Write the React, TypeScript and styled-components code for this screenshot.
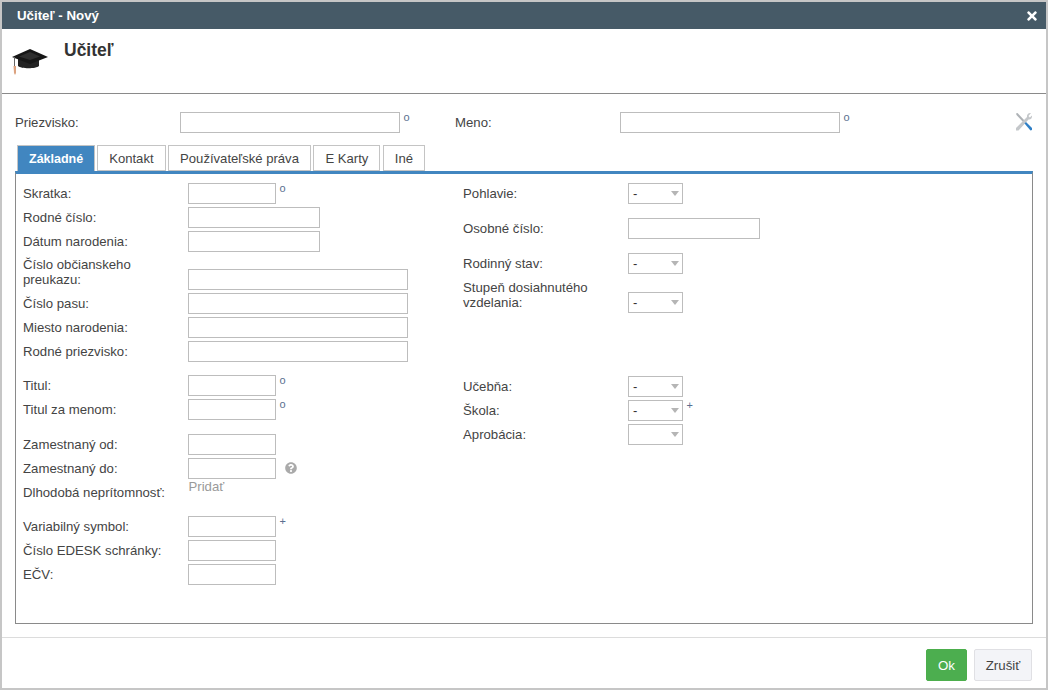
import styled, { createGlobalStyle } from "styled-components";
import { FaTimes, FaQuestionCircle } from "react-icons/fa";

const GlobalStyle = createGlobalStyle`
  html, body { margin: 0; padding: 0; background: #fff; }
  body { font-family: "Liberation Sans", Arial, sans-serif; font-size: 13px; color: #444; }
  * { box-sizing: border-box; }
`;

const CapIcon = () => (
  <svg width="38" height="30" viewBox="0 0 38 30">
    <path d="M7 11 L19 16 L28 12 L28 19 C25 22 10 22 7 19 Z" fill="#222" />
    <path d="M1 10 L19 2 L37 10 L19 17 Z" fill="#161616" />
    <path d="M8 9.5 L19 5 L29 9.5 L19 13 Z" fill="#2e2e2e" />
    <path d="M3.5 10 L3.5 20" stroke="#666" strokeWidth="1" />
    <path d="M2.5 19 L5 19 L5 26 L4 28 L3 26 Z" fill="#dca27f" />
  </svg>
);

const ToolsIcon = () => (
  <svg width="18" height="20" viewBox="0 0 18 20">
    <path d="M1 1.5 L2.5 1 L10 9 L8.5 10.5 L1.5 3 Z" fill="#aeb2b6" />
    <path d="M16 1 C13.5 0.5 11.5 2.5 12 5 L1 16 L1 18.5 L3.5 18.5 L13.5 7.5 C15.5 8 17.5 6 17 3.5 L14.8 5.4 L13.5 4 Z" fill="#c4c7ca" />
    <path d="M9.5 11.5 L11 10 L17 16 L17 18 L15.5 18.5 Z" fill="#2f7fc6" />
  </svg>
);

type FieldDef = {
  label: string;
  width?: number;
  select?: string;
  mark?: string;
  help?: boolean;
  height?: number;
  tall?: boolean;
};

const leftGroups: FieldDef[][] = [
  [
    { label: "Skratka:", width: 88, mark: "o" },
    { label: "Rodné číslo:", width: 132 },
    { label: "Dátum narodenia:", width: 132 },
    { label: "Číslo občianskeho preukazu:", width: 220, height: 38, tall: true },
    { label: "Číslo pasu:", width: 220 },
    { label: "Miesto narodenia:", width: 220 },
    { label: "Rodné priezvisko:", width: 220 },
  ],
  [
    { label: "Titul:", width: 88, mark: "o" },
    { label: "Titul za menom:", width: 88, mark: "o" },
  ],
  [
    { label: "Zamestnaný od:", width: 88 },
    { label: "Zamestnaný do:", width: 88, help: true },
  ],
];

const leftLast: FieldDef[] = [
  { label: "Variabilný symbol:", width: 88, mark: "+" },
  { label: "Číslo EDESK schránky:", width: 88 },
  { label: "EČV:", width: 88 },
];

const Field = ({ label, width, select, mark, help, height, tall }: FieldDef) => (
  <FieldRow $height={height ?? 24} $tall={tall}>
    <Label>{label}</Label>
    {select !== undefined ? (
      <SelectBox>
        {select}
        <Caret />
      </SelectBox>
    ) : (
      <TextInput $width={width ?? 88} />
    )}
    {mark && <Mark>{mark}</Mark>}
    {help && (
      <Help>
        <FaQuestionCircle size={12} />
      </Help>
    )}
  </FieldRow>
);

export default function App() {
  return (
    <>
      <GlobalStyle />
      <Dialog>
        <TitleBar>
          <span>Učiteľ - Nový</span>
          <CloseBtn>
            <FaTimes size={14} />
          </CloseBtn>
        </TitleBar>
        <Head>
          <CapWrap>
            <CapIcon />
          </CapWrap>
          <HeadTitle>Učiteľ</HeadTitle>
        </Head>
        <NameRow>
          <NameCell>
            <NameLabel>Priezvisko:</NameLabel>
            <NameInput />
            <Mark>o</Mark>
          </NameCell>
          <NameCell>
            <NameLabel>Meno:</NameLabel>
            <NameInput />
            <Mark>o</Mark>
          </NameCell>
          <ToolsWrap>
            <ToolsIcon />
          </ToolsWrap>
        </NameRow>
        <Tabs>
          <Tab $active>Základné</Tab>
          <Tab>Kontakt</Tab>
          <Tab>Používateľské práva</Tab>
          <Tab>E Karty</Tab>
          <Tab>Iné</Tab>
        </Tabs>
        <Panel>
          <LeftCol>
            <Group>
              {leftGroups[0].map((f) => (
                <Field key={f.label} {...f} />
              ))}
            </Group>
            <Group $gap={11}>
              {leftGroups[1].map((f) => (
                <Field key={f.label} {...f} />
              ))}
            </Group>
            <Group $gap={0}>
              {leftGroups[2].map((f) => (
                <Field key={f.label} {...f} />
              ))}
            </Group>
            <AbsenceRow>
              <Label>Dlhodobá neprítomnosť:</Label>
              <AddLink>Pridať</AddLink>
            </AbsenceRow>
            <Group>
              {leftLast.map((f) => (
                <Field key={f.label} {...f} />
              ))}
            </Group>
          </LeftCol>
          <RightCol>
            <TallGroup>
              <Field label="Pohlavie:" select="-" height={35} />
              <Field label="Osobné číslo:" width={132} height={35} />
              <Field label="Rodinný stav:" select="-" height={27} />
              <Field label="Stupeň dosiahnutého vzdelania:" select="-" height={36} tall />
            </TallGroup>
            <Group>
              <Field label="Učebňa:" select="-" />
              <Field label="Škola:" select="-" mark="+" />
              <Field label="Aprobácia:" select="" />
            </Group>
          </RightCol>
        </Panel>
        <Footer>
          <OkButton>Ok</OkButton>
          <CancelButton>Zrušiť</CancelButton>
        </Footer>
      </Dialog>
    </>
  );
}

const Dialog = styled.div`
  width: 1048px;
  height: 690px;
  border: 2px solid #c6c6c6;
  display: flex;
  flex-direction: column;
  background: #fff;
  overflow: hidden;
`;

const TitleBar = styled.div`
  height: 27px;
  flex: none;
  background: #465a67;
  color: #fff;
  font-weight: bold;
  font-size: 13.3px;
  display: flex;
  align-items: center;
  justify-content: space-between;
  padding: 0 7px 0 15px;
`;

const CloseBtn = styled.span`
  display: flex;
  color: #fff;
`;

const Head = styled.div`
  height: 65px;
  flex: none;
  border-bottom: 1px solid #8a8a8a;
  display: flex;
  align-items: flex-start;
`;

const CapWrap = styled.div`
  margin: 18px 0 0 9px;
  width: 53px;
`;

const HeadTitle = styled.h1`
  margin: 11px 0 0;
  font-size: 17.5px;
  font-weight: bold;
  color: #333;
`;

const NameRow = styled.div`
  height: 51px;
  flex: none;
  display: flex;
  padding: 18px 13px 0 13px;
`;

const NameCell = styled.div`
  width: 440px;
  display: flex;
  align-items: flex-start;
  &:last-of-type {
    width: auto;
  }
`;

const NameLabel = styled.label`
  width: 165px;
  flex: none;
  line-height: 21px;
  font-size: 13.2px;
`;

const NameInput = styled.input`
  width: 220px;
  height: 21px;
  border: 1px solid #bdbdbd;
  background: #fff;
  padding: 0;
  flex: none;
`;

const ToolsWrap = styled.div`
  margin-left: auto;
  display: flex;
`;

const Tabs = styled.div`
  height: 26px;
  flex: none;
  display: flex;
  gap: 2.5px;
  padding-left: 15px;
`;

const Tab = styled.div<{ $active?: boolean }>`
  height: 26px;
  padding: 0 11px;
  display: flex;
  align-items: center;
  font-size: ${(p) => (p.$active ? "12.5px" : "13.1px")};
  border: 1px solid #c4c4c4;
  border-bottom: ${(p) => (p.$active ? "none" : "1px solid #c4c4c4")};
  background: ${(p) => (p.$active ? "#4186c0" : "#fff")};
  color: ${(p) => (p.$active ? "#fff" : "#444")};
  font-weight: ${(p) => (p.$active ? "bold" : "normal")};
  margin-right: ${(p) => (p.$active ? "-0.5px" : "0")};
`;

const Panel = styled.div`
  width: 1018px;
  height: 453px;
  flex: none;
  margin-left: 13px;
  border: 1px solid #8a8a8a;
  border-top: 3px solid #4186c0;
  padding: 9px 0 0 7px;
  display: flex;
`;

const LeftCol = styled.div`
  width: 440px;
  flex: none;
  display: flex;
  flex-direction: column;
`;

const RightCol = styled.div`
  flex: 1;
  display: flex;
  flex-direction: column;
`;

const Group = styled.div<{ $gap?: number }>`
  display: flex;
  flex-direction: column;
  margin-bottom: ${(p) => p.$gap ?? 10}px;
`;

const TallGroup = styled(Group)`
  height: 193px;
  margin-bottom: 0;
`;

const FieldRow = styled.div<{ $height: number; $tall?: boolean }>`
  height: ${(p) => p.$height}px;
  display: flex;
  align-items: ${(p) => (p.$tall ? "flex-end" : "flex-start")};
  padding-bottom: ${(p) => (p.$tall ? "3px" : "0")};
`;

const Label = styled.label`
  width: 165px;
  flex: none;
  font-size: 13.2px;
  line-height: 15px;
  padding: 3px 20px 3px 0;
  color: #444;
`;

const TextInput = styled.input<{ $width: number }>`
  width: ${(p) => p.$width}px;
  height: 21px;
  flex: none;
  padding: 0;
  border: 1px solid #bdbdbd;
  background: #fff;
`;

const SelectBox = styled.div`
  width: 55px;
  height: 21px;
  flex: none;
  border: 1px solid #bdbdbd;
  padding-left: 4px;
  line-height: 19px;
  position: relative;
  color: #333;
`;

const Caret = styled.span`
  position: absolute;
  right: 3px;
  top: 7px;
  width: 0;
  height: 0;
  border-left: 4.5px solid transparent;
  border-right: 4.5px solid transparent;
  border-top: 5px solid #b5b5b5;
`;

const Mark = styled.span`
  font-size: 11px;
  color: #5a6f8f;
  margin: -1px 0 0 3.5px;
  align-self: flex-start;
  line-height: 12px;
`;

const Help = styled.span`
  display: flex;
  color: #aaa;
  margin: 4px 0 0 9px;
  align-self: flex-start;
`;

const AbsenceRow = styled.div`
  display: flex;
  height: 24px;
  margin-bottom: 10px;
`;

const AddLink = styled.span`
  color: #9a9a9a;
  font-size: 13.2px;
  line-height: 15px;
  margin-top: -3px;
  padding-left: 0.5px;
`;

const Footer = styled.div`
  margin-top: 13px;
  flex: 1;
  border-top: 1px solid #dcdcdc;
  display: flex;
  justify-content: flex-end;
  align-items: flex-start;
  gap: 7px;
  padding: 11px 14px 0 0;
`;

const OkButton = styled.button`
  width: 41px;
  height: 32px;
  border: 1px solid #4cae4c;
  border-radius: 2px;
  background: #4cae4f;
  color: #fff;
  font-family: inherit;
  font-size: 13.3px;
  padding: 0;
`;

const CancelButton = styled.button`
  width: 58px;
  height: 32px;
  border: 1px solid #e0e0e4;
  border-radius: 2px;
  background: #f3f4f8;
  color: #444;
  font-family: inherit;
  font-size: 13.3px;
  padding: 0;
`;
